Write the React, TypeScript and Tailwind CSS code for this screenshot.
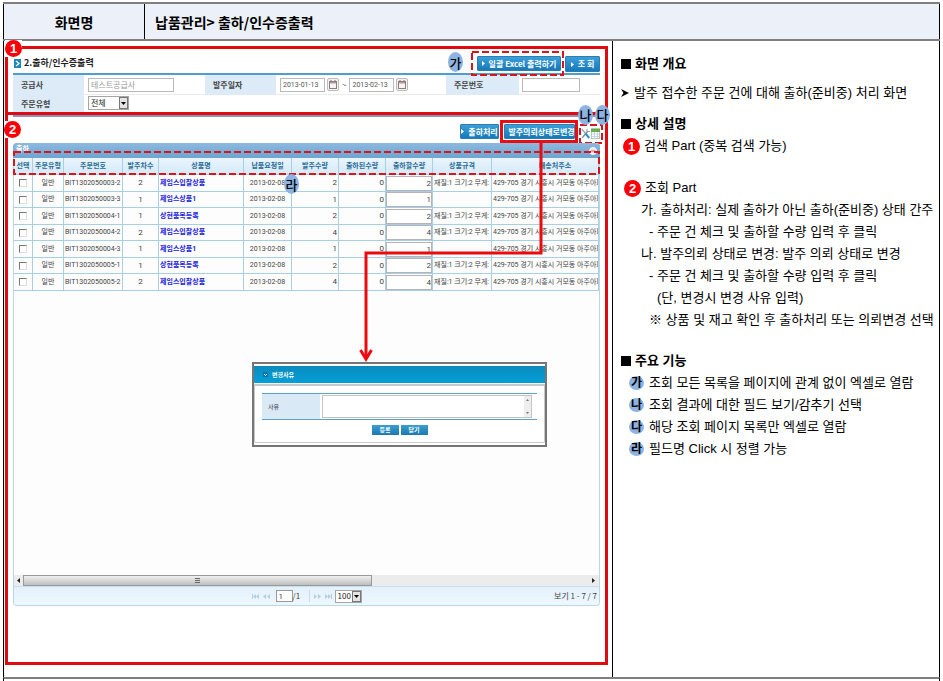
import type { ReactNode } from 'react';

type Order = {
  no: string;
  seq: number;
  name: string;
  qty: number;
  spec: boolean;
};

const orders: Order[] = [
  { no: 'BIT1302050003-2', seq: 2, name: '제임스입찰상품', qty: 2, spec: true },
  { no: 'BIT1302050003-3', seq: 1, name: '제임스상품1', qty: 1, spec: false },
  { no: 'BIT1302050004-1', seq: 1, name: '상현품목등록', qty: 2, spec: true },
  { no: 'BIT1302050004-2', seq: 2, name: '제임스입찰상품', qty: 4, spec: true },
  { no: 'BIT1302050004-3', seq: 1, name: '제임스상품1', qty: 1, spec: false },
  { no: 'BIT1302050005-1', seq: 1, name: '상현품목등록', qty: 2, spec: true },
  { no: 'BIT1302050005-2', seq: 2, name: '제임스입찰상품', qty: 4, spec: true },
];

const headers = [
  '선택', '주문유형', '주문번호', '발주차수', '상품명', '납품요청일',
  '발주수량', '출하된수량', '출하할수량', '상품규격', '배송처주소',
];

function NumberBadge({ n }: { n: number }) {
  return (
    <span className="flex h-[17px] w-[17px] shrink-0 items-center justify-center rounded-full bg-[#fb0007] font-['Liberation_Sans',sans-serif] text-[13px] font-bold leading-none text-white">
      {n}
    </span>
  );
}

function Marker({ children }: { children: ReactNode }) {
  return (
    <span className="flex h-5 w-[15px] items-center justify-center rounded-[50%] bg-[#8db3e2] text-[13px] font-medium leading-none text-black">
      {children}
    </span>
  );
}

function ActionButton({ children, size }: { children: ReactNode; size: string }) {
  return (
    <button
      className={`flex items-center justify-center gap-1 whitespace-nowrap rounded-[1px] border border-[#2b7db3] bg-gradient-to-b from-[#3b9fd8] to-[#1579b8] text-[8px] font-bold leading-none text-white ${size}`}
    >
      <svg width="3" height="5" viewBox="0 0 3 5" aria-hidden="true">
        <path d="M0 0L3 2.500L0 5Z" fill="#fff" />
      </svg>
      {children}
    </button>
  );
}

function DashedFrame() {
  return (
    <svg className="h-full w-full overflow-visible" aria-hidden="true">
      <rect x="1" y="1" width="100%" height="100%" fill="none" stroke="#d8151b" strokeWidth="2" strokeDasharray="7 3" />
    </svg>
  );
}

function DropDown({ label, options, size }: { label: string; options: string[]; size: string }) {
  return (
    <span className={`relative block border border-[#a5a5a5] bg-white ${size}`}>
      <select aria-label={label} className="block h-full w-full appearance-none bg-transparent pl-[2px] text-[8px] leading-none text-[#222] outline-none">
        {options.map((o) => (
          <option key={o}>{o}</option>
        ))}
      </select>
      <span className="pointer-events-none absolute inset-y-0 right-0 flex w-[9px] items-center justify-center border border-[#777] bg-[#e4e4e4]">
        <svg width="5" height="3" viewBox="0 0 5 3" aria-hidden="true">
          <path d="M0 0H5L2.500 3Z" fill="#000" />
        </svg>
      </span>
    </span>
  );
}

function CalendarButton() {
  return (
    <button aria-label="달력" className="flex h-[13px] w-3 items-center justify-center rounded-[2px] border border-[#bbb] bg-[#f3f3f3]">
      <svg width="8" height="9" viewBox="0 0 8 9" aria-hidden="true">
        <rect x="0.500" y="1.500" width="7" height="7" fill="#f7f3f3" stroke="#8d7f80" />
        <path d="M1 2H7V3.500H1Z" fill="#b69a9c" />
        <path d="M2 0V2M6 0V2" stroke="#777" />
      </svg>
    </button>
  );
}

function FieldLabel({ id, children }: { id: string; children: ReactNode }) {
  return (
    <label htmlFor={id} className="flex items-center bg-[#dcebf7] pl-2 text-[8px] font-bold text-[#444]">
      {children}
    </label>
  );
}

function SearchPart() {
  const box = 'h-[14px] border border-[#b9b9b9] bg-white px-[2px] leading-none outline-none';
  const date = `w-[45px] font-['Roboto','Noto_Sans_CJK_KR',sans-serif] text-[7px] ${box}`;
  return (
    <section className="relative ml-px mr-1 mt-[5px] border-[3px] border-[#df0b10] px-[5px]">
      <span className="absolute -left-[3px] -top-[9px] bg-white">
        <NumberBadge n={1} />
      </span>
      <div className="flex h-[26px] items-center border-b-2 border-[#4f9dc8]">
        <svg className="ml-px mr-[3px] mt-1" width="7" height="9" viewBox="0 0 7 9" aria-hidden="true">
          <rect width="7" height="9" fill="#1c86bd" />
          <path d="M2 2L5 4.500L2 7" fill="none" stroke="#fff" strokeWidth="1.300" />
        </svg>
        <h2 className="mt-1 text-[9px] font-bold text-[#222]">2.출하/인수증출력</h2>
        <div className="ml-auto flex items-start gap-1 pt-[6px]">
          <div className="relative">
            <ActionButton size="h-[15px] w-[84px]">일괄 Excel 출력하기</ActionButton>
            <div className="pointer-events-none absolute -bottom-[3px] -left-[6px] -right-px -top-[5px]">
              <DashedFrame />
            </div>
            <span className="absolute -left-[29px] -top-1">
              <Marker>가</Marker>
            </span>
          </div>
          <ActionButton size="h-4 w-[35px]">조 회</ActionButton>
        </div>
      </div>
      <form className="grid grid-cols-[71px_121fr_71px_170fr_73px_81fr] grid-rows-[20px_17px]">
        <FieldLabel id="supplier">공급사</FieldLabel>
        <div className="flex items-center border-b border-[#ececec] pl-1">
          <input id="supplier" defaultValue="테스트공급사" className={`w-[86px] text-[8px] text-[#999] ${box}`} />
        </div>
        <FieldLabel id="from">발주일자</FieldLabel>
        <div className="flex items-center gap-[2px] border-b border-[#ececec] pl-1 text-[8px] text-[#555]">
          <input id="from" defaultValue="2013-01-13" className={date} />
          <CalendarButton />
          <span className="px-[1px]">~</span>
          <input aria-label="발주일자 종료" defaultValue="2013-02-13" className={date} />
          <CalendarButton />
        </div>
        <FieldLabel id="orderNo">주문번호</FieldLabel>
        <div className="flex items-center border-b border-[#ececec] pl-[3px]">
          <input id="orderNo" className={`w-[58px] text-[8px] ${box}`} />
        </div>
        <FieldLabel id="orderType">주문유형</FieldLabel>
        <div className="col-span-5 flex items-start pl-1 pt-px">
          <DropDown label="주문유형" options={['전체', '일반']} size="h-[14px] w-[41px]" />
        </div>
      </form>
    </section>
  );
}

function ToolIcons() {
  return (
    <div className="relative ml-[6px] mt-[3px] flex gap-px">
      <button aria-label="필드 보기/감추기">
        <svg width="9" height="11" viewBox="0 0 9 11" aria-hidden="true">
          <path d="M1.200 9.800L6.500 3.500" stroke="#8a959c" strokeWidth="1.500" />
          <path d="M0.800 1L4.500 5.500" stroke="#9aa5ab" strokeWidth="1.200" />
          <path d="M4.500 5.500L8.200 10" stroke="#2d8fd0" strokeWidth="2" />
          <path d="M6 0.800V3.500H8.800" fill="none" stroke="#8a959c" />
        </svg>
      </button>
      <button aria-label="엑셀로 열람">
        <svg width="9" height="11" viewBox="0 0 9 11" aria-hidden="true">
          <rect x="0.500" y="0.500" width="8" height="10" fill="#fff" stroke="#b3c7b3" />
          <path d="M0 1H9V4H0Z" fill="#64ad4c" />
          <path d="M0 6H9M0 8.500H9M3.500 4V11M6.500 4V11" stroke="#b9cfe0" strokeWidth="0.800" />
        </svg>
      </button>
      <div className="pointer-events-none absolute -bottom-[3px] -left-[2px] -right-px -top-[4px]">
        <DashedFrame />
      </div>
      <span className="absolute -left-[3px] -top-[23px] flex gap-[2px]">
        <Marker>나</Marker>
        <Marker>다</Marker>
      </span>
    </div>
  );
}

function OrderTable() {
  const cell = 'overflow-hidden whitespace-nowrap border-b border-r border-[#a9cfe6] p-0';
  return (
    <table className="w-full table-fixed border-separate border-spacing-0 font-['Roboto','Noto_Sans_CJK_KR',sans-serif] text-[7px] leading-none text-[#444]">
      <colgroup>
        <col className="w-[19px]" />
        <col className="w-[31px]" />
        <col className="w-[59px]" />
        <col className="w-[36px]" />
        <col className="w-[85px]" />
        <col className="w-[48px]" />
        <col className="w-[47px]" />
        <col className="w-[47px]" />
        <col className="w-[47px]" />
        <col className="w-[59px]" />
        <col />
      </colgroup>
      <thead>
        <tr className="h-[17px] bg-gradient-to-b from-[#eaf5fd] to-[#d3e9f8]">
          {headers.map((h) => (
            <th key={h} className={`${cell} font-bold text-[#2a6a94] last:pl-5`}>{h}</th>
          ))}
        </tr>
      </thead>
      <tbody>
        {orders.map((o) => (
          <tr key={o.no} className="h-[17px] even:h-4">
            <td className={cell}>
              <input
                type="checkbox"
                aria-label={`${o.no} 선택`}
                className="mx-auto block h-2 w-2 appearance-none border border-b-[#ddd] border-l-[#777] border-r-[#ddd] border-t-[#777] bg-white"
              />
            </td>
            <td className={`${cell} text-center`}>일반</td>
            <td className={`${cell} pl-px`}>{o.no}</td>
            <td className={`${cell} text-center text-[8px]`}>{o.seq}</td>
            <td className={`${cell} pl-px`}>
              <a href="#item" className="font-bold text-[#2222dd]">{o.name}</a>
            </td>
            <td className={`${cell} text-center`}>2013-02-08</td>
            <td className={`${cell} pr-px text-right text-[8px]`}>{o.qty}</td>
            <td className={`${cell} pr-px text-right text-[8px]`}>0</td>
            <td className={cell}>
              <input
                aria-label={`${o.no} 출하할수량`}
                defaultValue={o.qty}
                className="block h-[15px] w-full border border-[#b5b5b5] bg-white text-right text-[8px] leading-none outline-none"
              />
            </td>
            <td className={`${cell} pl-px`}>{o.spec ? '재질:1 크기:2 무게:' : ''}</td>
            <td className={`${cell} pl-px`}>429-705 경기 시흥시 거모동 아주아파</td>
          </tr>
        ))}
      </tbody>
    </table>
  );
}

function PagerIcon({ d }: { d: string }) {
  return (
    <svg width="7" height="5" viewBox="0 0 7 5" aria-hidden="true">
      <path d={d} fill="#b4cfe2" />
    </svg>
  );
}

function GridFooter() {
  return (
    <>
      <div className="flex h-[11px] items-center bg-[#ececec] pr-1">
        <svg className="mx-[3px]" width="3" height="5" viewBox="0 0 3 5" aria-hidden="true">
          <path d="M3 0L0 2.500L3 5Z" fill="#222" />
        </svg>
        <div className="flex h-full w-[60%] items-center justify-center border border-[#999] bg-gradient-to-b from-[#f0f0f0] to-[#bdbdbd]">
          <svg width="5" height="5" viewBox="0 0 5 5" aria-hidden="true">
            <path d="M0 0.500H5M0 2.500H5M0 4.500H5" stroke="#666" />
          </svg>
        </div>
        <svg className="ml-auto" width="3" height="5" viewBox="0 0 3 5" aria-hidden="true">
          <path d="M0 0L3 2.500L0 5Z" fill="#222" />
        </svg>
      </div>
      <div className="grid h-[19px] grid-cols-[1fr_auto_1fr] items-center rounded-b-[4px] border-t border-[#c9dfee] bg-gradient-to-b from-[#e3f1fc] to-[#eef7fd] text-[8px] text-[#444]">
        <span />
        <div className="flex items-center">
          <button aria-label="첫 페이지"><PagerIcon d="M0 0H1V5H0ZM4 0V5L1 2.500ZM7 0V5L4 2.500Z" /></button>
          <button aria-label="이전 페이지" className="ml-1"><PagerIcon d="M3 0V5L0 2.500ZM7 0V5L4 2.500Z" /></button>
          <input aria-label="페이지" defaultValue="1" className="ml-[6px] h-3 w-[17px] border border-[#999] bg-white pl-[2px] font-['Roboto',sans-serif] text-[8px] leading-none outline-none" />
          <span className="w-4">/1</span>
          <span className="mr-1 h-3 w-px bg-[#c8dcea]" />
          <button aria-label="다음 페이지"><PagerIcon d="M0 0V5L3 2.500ZM4 0V5L7 2.500Z" /></button>
          <button aria-label="마지막 페이지" className="ml-1 mr-[3px]"><PagerIcon d="M0 0V5L3 2.500ZM3 0V5L6 2.500ZM6 0H7V5H6Z" /></button>
          <DropDown label="페이지당 건수" options={['100', '50']} size="h-[13px] w-[27px]" />
        </div>
        <span className="pr-[2px] text-right">보기 1 - 7 / 7</span>
      </div>
    </>
  );
}

function ReasonDialog() {
  const btn = 'h-[10px] w-[27px] bg-gradient-to-b from-[#3b9fd0] to-[#1b78b0] text-[6px] font-bold leading-none text-white';
  return (
    <div role="dialog" aria-label="변경사유" className="absolute right-[58px] top-[247px] flex h-[85px] w-[295px] flex-col border-2 border-[#757575] bg-white">
      <div className="mt-[2px] flex h-[17px] items-center gap-1 bg-gradient-to-b from-[#0b8abb] to-[#02a0d8] pl-[9px] text-[6px] font-bold text-white">
        <svg width="5" height="5" viewBox="0 0 5 5" aria-hidden="true">
          <rect width="5" height="5" fill="#0776ad" />
          <path d="M1 2L2.500 3.500L4 2" fill="none" stroke="#fff" />
        </svg>
        변경사유
      </div>
      <div className="mb-[2px] mt-px flex-1 rounded-b-[2px] border border-t-2 border-[#c8c8c8] px-[7px] pt-[7px]">
        <div className="flex h-[27px] border-y border-[#5ba3c6]">
          <label htmlFor="reason" className="flex w-[58px] items-center bg-[#dae9f6] pl-[6px] text-[6px] text-[#333]">사유</label>
          <div className="my-px ml-[2px] mr-[5px] flex flex-1 border border-[#c4c4c4]">
            <textarea id="reason" className="h-full min-w-0 flex-1 resize-none bg-white text-[6px] outline-none" />
            <span className="flex w-[7px] flex-col items-center justify-between bg-[#eee] py-[3px]">
              <svg width="3" height="2" viewBox="0 0 3 2" aria-hidden="true"><path d="M0 2L1.500 0L3 2Z" fill="#777" /></svg>
              <svg width="3" height="2" viewBox="0 0 3 2" aria-hidden="true"><path d="M0 0L1.500 2L3 0Z" fill="#777" /></svg>
            </span>
          </div>
        </div>
        <div className="mt-[5px] flex justify-center gap-[2px]">
          <button className={btn}>등록</button>
          <button className={btn}>닫기</button>
        </div>
      </div>
    </div>
  );
}

function ListPart() {
  return (
    <section className="relative ml-px mr-1 flex flex-1 flex-col border-[3px] border-t-0 border-[#df0b10] px-[5px] pb-14">
      <span className="absolute -left-1 top-[6px] bg-white">
        <NumberBadge n={2} />
      </span>
      <div className="h-[2px] bg-[#8b93b9]" />
      <div className="flex h-[26px] items-center justify-end pt-[3px]">
        <ActionButton size="h-[15px] w-[39px]">출하처리</ActionButton>
        <div className="relative ml-[5px]">
          <ActionButton size="h-[15px] w-[71px]">발주의뢰상태로변경</ActionButton>
          <span className="pointer-events-none absolute -inset-1 -right-[3px] border-[3px] border-[#e80d12]" />
        </div>
        <ToolIcons />
      </div>
      <div className="relative flex flex-1 flex-col rounded-[4px] border-x border-b border-[#b9d8ea] bg-[#fdfdfd]">
        <div className="-mx-px flex h-[15px] items-start justify-between rounded-t-[4px] bg-gradient-to-b from-[#8cb9de] to-[#6ea5d1] px-[3px] text-[7px] font-bold leading-[10px] text-white">
          출하
          <svg className="mt-1" width="8" height="8" viewBox="0 0 8 8" aria-hidden="true">
            <circle cx="4" cy="4" r="3.500" fill="#f3dfe5" stroke="#fff" />
            <path d="M2 4H6" stroke="#d46a74" />
          </svg>
        </div>
        <OrderTable />
        <div className="pointer-events-none absolute -left-px right-px top-[8px] h-[22px]">
          <DashedFrame />
        </div>
        <span className="absolute left-[270px] top-[31px]">
          <Marker>라</Marker>
        </span>
        <div className="flex-1" />
        <GridFooter />
      </div>
      <svg className="pointer-events-none absolute right-[62px] top-7" width="184" height="220" viewBox="0 0 184 220" aria-hidden="true">
        <path d="M182 0V110H7V216" fill="none" stroke="#ec0a0f" strokeWidth="3" />
        <path d="M1.500 207L7 216L12.500 207" fill="none" stroke="#ec0a0f" strokeWidth="3" />
      </svg>
      <ReasonDialog />
    </section>
  );
}

function Heading({ children }: { children: ReactNode }) {
  return (
    <h3 className="flex items-center gap-1 font-bold">
      <span className="h-[10px] w-[10px] bg-black" />
      {children}
    </h3>
  );
}

const features = [
  ['가', '조회 모든 목록을 페이지에 관계 없이 엑셀로 열람'],
  ['나', '조회 결과에 대한 필드 보기/감추기 선택'],
  ['다', '해당 조회 페이지 목록만 엑셀로 열람'],
  ['라', '필드명 Click 시 정렬 가능'],
];

function Description() {
  return (
    <aside className="w-[327px] shrink-0 whitespace-nowrap border-l border-black pl-2 pt-3 font-['Liberation_Sans','Noto_Sans_CJK_KR',sans-serif] text-[13px] leading-[22px] text-black">
      <Heading>화면 개요</Heading>
      <p className="mt-[7px] flex items-center gap-[5px]">
        <svg width="8" height="8" viewBox="0 0 8 8" aria-hidden="true">
          <path d="M0 0L8 4L0 8L2.500 4Z" fill="#000" />
        </svg>
        발주 접수한 주문 건에 대해 출하(준비중) 처리 화면
      </p>
      <div className="mt-[9px]">
        <Heading>상세 설명</Heading>
      </div>
      <p className="flex items-center gap-1 pl-[2px]">
        <NumberBadge n={1} />
        검색 Part (중복 검색 가능)
      </p>
      <p className="mt-5 flex items-center gap-1 pl-[3px]">
        <NumberBadge n={2} />
        조회 Part
      </p>
      <p className="pl-5">가. 출하처리: 실제 출하가 아닌 출하(준비중) 상태 간주</p>
      <p className="pl-7">- 주문 건 체크 및 출하할 수량 입력 후 클릭</p>
      <p className="pl-5">나. 발주의뢰 상태로 변경: 발주 의뢰 상태로 변경</p>
      <p className="pl-7">- 주문 건 체크 및 출하할 수량 입력 후 클릭</p>
      <p className="pl-9">(단, 변경시 변경 사유 입력)</p>
      <p className="pl-7">※ 상품 및 재고 확인 후 출하처리 또는 의뢰변경 선택</p>
      <div className="mt-[19px]">
        <Heading>주요 기능</Heading>
      </div>
      <ul>
        {features.map(([mark, text]) => (
          <li key={mark} className="flex items-center gap-[5px] pl-2">
            <span className="flex h-[14px] w-[15px] items-center justify-center rounded-[50%] bg-[#8db3e2] text-[12px] font-bold leading-none">
              {mark}
            </span>
            {text}
          </li>
        ))}
      </ul>
    </aside>
  );
}

export default function App() {
  return (
    <div className="flex min-h-screen flex-col bg-white px-[3px] pt-[2px] font-['Noto_Sans_CJK_KR',sans-serif]">
      <header className="flex h-[39px] border-y-2 border-[#7f7f7f] bg-[#ebf0f9] text-sm font-bold text-black">
        <div className="flex w-[142px] items-center justify-center border-l border-r border-black">화면명</div>
        <h1 className="flex flex-1 items-center border-r border-black pl-[10px]">납품관리&gt; 출하/인수증출력</h1>
      </header>
      <main className="flex flex-1 border-x border-black">
        <div className="flex min-w-0 flex-1 flex-col pb-3">
          <SearchPart />
          <ListPart />
        </div>
        <Description />
      </main>
      <div className="h-1 border-x border-t-2 border-x-black border-t-[#7f7f7f]" />
    </div>
  );
}
